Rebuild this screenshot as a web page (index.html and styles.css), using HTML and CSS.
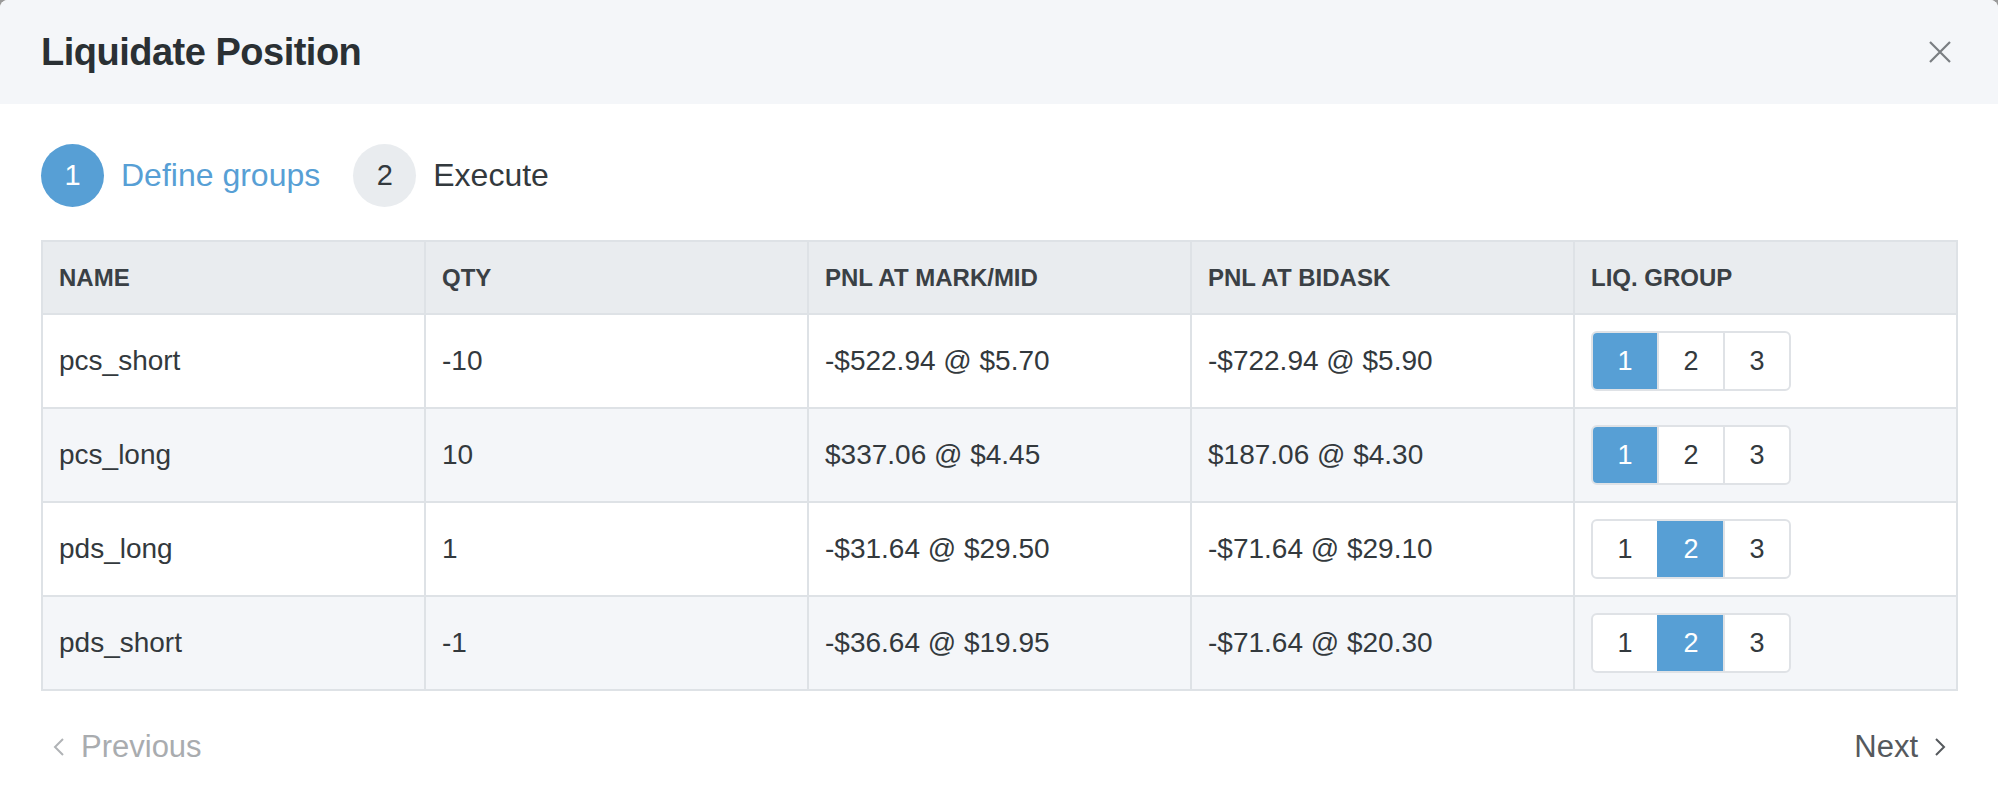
FILE: index.html
```html
<!DOCTYPE html>
<html lang="en">
<head>
  <meta charset="UTF-8" />
  <title>Liquidate Position</title>
  <meta name="viewport" content="width=device-width, initial-scale=1.0">
  <link rel="stylesheet" href="styles.css">
</head>
<body>
  <div class="modal">
    <header class="modal-header">
      <h1>Liquidate Position</h1>
      <button class="close" aria-label="Close">
        <svg width="24" height="24" viewBox="0 0 24 24"><path d="M2 2 L22 22 M22 2 L2 22" stroke="#7a7e82" stroke-width="2.2" fill="none"/></svg>
      </button>
    </header>

    <div class="modal-body">
      <div class="steps">
        <div class="step active"><span class="num">1</span><span class="label">Define groups</span></div>
        <div class="step"><span class="num">2</span><span class="label">Execute</span></div>
      </div>

      <table class="positions">
        <thead>
          <tr>
            <th>Name</th>
            <th>Qty</th>
            <th>PnL at mark/mid</th>
            <th>PnL at bidask</th>
            <th>Liq. group</th>
          </tr>
        </thead>
        <tbody>
          <tr>
            <td>pcs_short</td>
            <td>-10</td>
            <td>-$522.94 @ $5.70</td>
            <td>-$722.94 @ $5.90</td>
            <td><div class="group"><span class="on">1</span><span>2</span><span>3</span></div></td>
          </tr>
          <tr>
            <td>pcs_long</td>
            <td>10</td>
            <td>$337.06 @ $4.45</td>
            <td>$187.06 @ $4.30</td>
            <td><div class="group"><span class="on">1</span><span>2</span><span>3</span></div></td>
          </tr>
          <tr>
            <td>pds_long</td>
            <td>1</td>
            <td>-$31.64 @ $29.50</td>
            <td>-$71.64 @ $29.10</td>
            <td><div class="group"><span>1</span><span class="on">2</span><span>3</span></div></td>
          </tr>
          <tr>
            <td>pds_short</td>
            <td>-1</td>
            <td>-$36.64 @ $19.95</td>
            <td>-$71.64 @ $20.30</td>
            <td><div class="group"><span>1</span><span class="on">2</span><span>3</span></div></td>
          </tr>
        </tbody>
      </table>

      <div class="pager">
        <a class="prev">
          <svg width="12" height="20" viewBox="0 0 12 20"><path d="M10 2 L2 10 L10 18" stroke="#b0b3b6" stroke-width="2" fill="none"/></svg>
          Previous
        </a>
        <a class="next">
          Next
          <svg width="12" height="20" viewBox="0 0 12 20"><path d="M2 2 L10 10 L2 18" stroke="#55595d" stroke-width="2" fill="none"/></svg>
        </a>
      </div>
    </div>
  </div>
</body>
</html>
```

FILE: styles.css
```css
body {
  margin: 0;
  font-family: 'Liberation Sans', Arial, sans-serif;
  background-color: #9a9a9a;
  color: #33393d;
}
.modal {
  background: white;
  height: 804px;
  border-radius: 8px 8px 0 0;
  overflow: hidden;
}
.modal-header {
  background-color: #f4f6f9;
  height: 104px;
  padding: 0 46px 0 41px;
  display: flex;
  align-items: center;
  justify-content: space-between;
}
.modal-header h1 {
  margin: 0;
  font-size: 38px;
  letter-spacing: -0.5px;
  color: #2a3034;
}
.close {
  background: none;
  border: none;
  padding: 0;
  cursor: pointer;
  display: flex;
}
.modal-body {
  padding: 40px 40px 0 41px;
}
.steps {
  display: flex;
  align-items: center;
  gap: 33px;
  margin-bottom: 33px;
}
.step {
  display: flex;
  align-items: center;
  gap: 17px;
  font-size: 32px;
  color: #33393d;
}
.step .num {
  width: 63px;
  height: 63px;
  border-radius: 50%;
  background-color: #e9ecef;
  display: flex;
  align-items: center;
  justify-content: center;
  font-size: 29px;
}
.step.active .num {
  background-color: #579fd5;
  color: white;
}
.step.active .label {
  color: #579fd5;
}
.positions {
  width: 100%;
  border-collapse: collapse;
  table-layout: fixed;
  border: 2px solid #dee2e6;
}
.positions th,
.positions td {
  border: 2px solid #dee2e6;
  text-align: left;
  padding: 0 16px;
}
.positions th {
  background-color: #e9ecef;
  height: 71px;
  font-size: 24px;
  text-transform: uppercase;
  color: #3a4045;
}
.positions td {
  height: 92px;
  font-size: 28px;
}
.positions tbody tr:nth-child(even) td {
  background-color: #f4f6f9;
}
.group {
  display: inline-flex;
  border: 2px solid #dfe2e6;
  border-radius: 6px;
  overflow: hidden;
  background: white;
  vertical-align: middle;
}
.group span {
  width: 64px;
  height: 56px;
  display: flex;
  align-items: center;
  justify-content: center;
  font-size: 27px;
  color: #33393d;
}
.group span + span {
  border-left: 2px solid #dfe2e6;
}
.group span.on {
  background-color: #579fd5;
  color: white;
  border-color: #579fd5;
}
.pager {
  display: flex;
  justify-content: space-between;
  align-items: center;
  height: 112px;
  font-size: 31px;
}
.pager a {
  display: flex;
  align-items: center;
  gap: 16px;
  cursor: pointer;
}
.prev {
  color: #a9acaf;
  margin-left: 12px;
}
.next {
  color: #55595d;
  margin-right: 12px;
}
```
